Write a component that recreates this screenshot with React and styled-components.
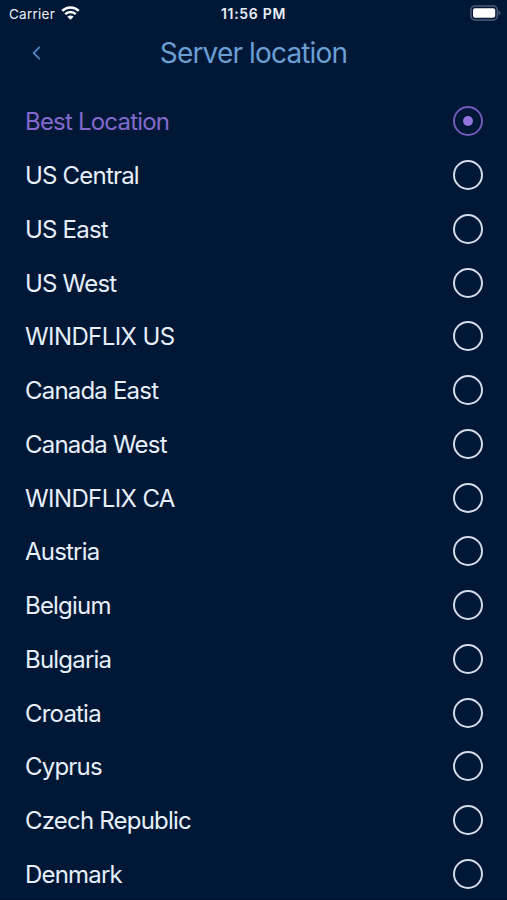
import { useState } from "react";
import styled, { createGlobalStyle } from "styled-components";

const locations = [
  "Best Location",
  "US Central",
  "US East",
  "US West",
  "WINDFLIX US",
  "Canada East",
  "Canada West",
  "WINDFLIX CA",
  "Austria",
  "Belgium",
  "Bulgaria",
  "Croatia",
  "Cyprus",
  "Czech Republic",
  "Denmark",
];

const GlobalStyle = createGlobalStyle`
  * {
    box-sizing: border-box;
  }
  body {
    margin: 0;
    background-color: #001836;
    font-family: Inter, "Liberation Sans", sans-serif;
  }
`
const Screen = styled.main`
  display: flex;
  flex-direction: column;
  width: 507px;
  height: 900px;
  overflow: hidden;
  background-color: #001836;
  border-bottom: 1px solid #00102a;
`
const StatusBar = styled.div`
  display: grid;
  grid-template-columns: 1fr auto 1fr;
  align-items: center;
  flex: none;
  height: 27px;
  padding: 0 6px;
  color: #e9eff8;
`
const Carrier = styled.div`
  display: flex;
  align-items: center;
  column-gap: 6px;
  padding-left: 3px;
  font-size: 13.5px;
  letter-spacing: 0.25px;
`
const Time = styled.div`
  font-size: 14px;
  font-weight: 600;
  letter-spacing: 0.7px;
`
const Battery = styled.svg`
  justify-self: end;
  margin-bottom: 1px;
`
const Wifi = styled.svg`
  margin-bottom: 1px;
`
const Header = styled.header`
  display: grid;
  grid-template-columns: 48px 1fr 48px;
  align-items: center;
  flex: none;
  height: 51px;
  padding: 0 12px;
`
const BackButton = styled.button`
  display: flex;
  justify-content: center;
  padding: 0;
  border: 0;
  background: none;
  color: #4f83bf;
`
const Title = styled.h1`
  margin: 0;
  padding-top: 1px;
  color: #6a9fd4;
  font-size: 28px;
  font-weight: 400;
  letter-spacing: -0.85px;
  text-align: center;
`
const List = styled.ul`
  flex: none;
  margin: 0;
  padding: 16.5px 24px 0 25px;
  list-style: none;
`
const Row = styled.li`
  display: flex;
  align-items: center;
  justify-content: space-between;
  height: 53.76px;
  color: ${({ $selected }) => ($selected ? "#8469cd" : "#e6effa")};
  cursor: pointer;
`
const Name = styled.span`
  padding-top: 1px;
  font-size: 24px;
  letter-spacing: ${({ $caps }) => ($caps ? "-0.6px" : "-0.8px")};
`
const Radio = styled.span`
  display: flex;
  align-items: center;
  justify-content: center;
  width: 30px;
  height: 30px;
  border: 2px solid ${({ $selected }) => ($selected ? "#7059b8" : "#d3dce8")};
  border-radius: 50%;
`
const Dot = styled.span`
  width: 10px;
  height: 10px;
  border-radius: 50%;
  background-color: #9275da;
`

const WifiIcon = () => (
  <Wifi width="19" height="14" viewBox="0 0 19 14" fill="none" stroke="#fff" strokeWidth="2.5">
    <path d="M1.2 4.9C5.8 0.3 13.2 0.3 17.8 4.9" />
    <path d="M4.2 8.1C7.2 5.2 11.8 5.2 14.8 8.1" />
    <path d="M9.5 13.8L6.4 10.7C8.1 9.2 10.9 9.2 12.6 10.7Z" fill="#fff" stroke="none" />
  </Wifi>
)

const BatteryIcon = () => (
  <Battery width="31" height="16" viewBox="0 0 31 16">
    <rect x="0.9" y="1" width="26.4" height="14" rx="4" fill="none" stroke="#4d5b77" strokeWidth="1.5" />
    <rect x="3" y="3.2" width="22.2" height="9.6" rx="2" fill="#fff" />
    <path d="M28.6 5.6C31 6.2 31 9.8 28.6 10.4Z" fill="#4d5b77" />
  </Battery>
)

export default function App() {
  const [selected, setSelected] = useState("Best Location");

  return (
    <>
      <GlobalStyle />
      <Screen>
        <StatusBar>
          <Carrier>
            Carrier
            <WifiIcon />
          </Carrier>
          <Time>11:56 PM</Time>
          <BatteryIcon />
        </StatusBar>
        <Header>
          <BackButton aria-label="Back">
            <svg width="9" height="14" viewBox="0 0 9 14" fill="none" stroke="currentColor" strokeWidth="1.8">
              <path d="M7.8 0.8L1.6 7L7.8 13.2" />
            </svg>
          </BackButton>
          <Title>Server location</Title>
        </Header>
        <List>
          {locations.map((name) => (
            <Row key={name} $selected={name === selected} onClick={() => setSelected(name)}>
              <Name $caps={name === name.toUpperCase()}>{name}</Name>
              <Radio $selected={name === selected}>
                {name === selected && <Dot />}
              </Radio>
            </Row>
          ))}
        </List>
      </Screen>
    </>
  )
}
